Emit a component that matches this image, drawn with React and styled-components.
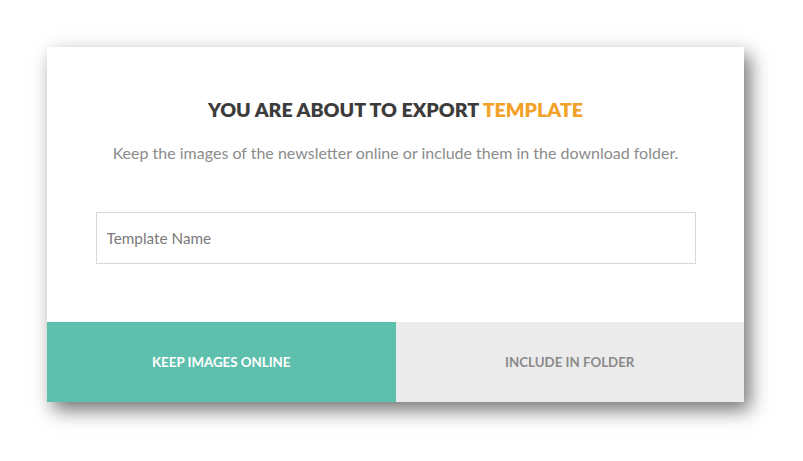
import React from "react";
import styled, { createGlobalStyle } from "styled-components";

const GlobalStyle = createGlobalStyle`
  html, body {
    margin: 0;
    padding: 0;
    background: #ffffff;
  }
`;

const App = () => {
  return (
    <>
      <GlobalStyle />
      <Page>
        <Card>
          <Body>
            <Title>
              YOU ARE ABOUT TO EXPORT <Accent>TEMPLATE</Accent>
            </Title>
            <Subtitle>
              Keep the images of the newsletter online or include them in the
              download folder.
            </Subtitle>
            <NameInput placeholder="Template Name" autoFocus />
          </Body>
          <Actions>
            <ActionButton $primary>KEEP IMAGES ONLINE</ActionButton>
            <ActionButton>INCLUDE IN FOLDER</ActionButton>
          </Actions>
        </Card>
      </Page>
    </>
  );
};

const Page = styled.div`
  display: flex;
  width: 803px;
  height: 461px;
  padding: 47px 0 0 47px;
  box-sizing: border-box;
  align-items: flex-start;
`;

const Card = styled.div`
  display: flex;
  flex-direction: column;
  width: 697px;
  height: 355px;
  background: #ffffff;
  box-shadow: 6px 8px 18px rgba(0, 0, 0, 0.55);
`;

const Body = styled.div`
  display: flex;
  flex: 1;
  flex-direction: column;
  align-items: center;
  padding-top: 51px;
  box-sizing: border-box;
`;

const Title = styled.div`
  font-family: "Lato", sans-serif;
  font-weight: 800;
  font-size: 19.6px;
  line-height: 24px;
  color: #3c3c3c;
`;

const Accent = styled.span`
  color: #f2a229;
`;

const Subtitle = styled.div`
  margin-top: 21px;
  font-family: "Lato", sans-serif;
  font-weight: 400;
  font-size: 16px;
  line-height: 20px;
  color: #8c8c8c;
`;

const NameInput = styled.input`
  margin-top: 49px;
  width: 600px;
  height: 52px;
  padding: 0 10px;
  box-sizing: border-box;
  border: 1px solid #d8d8d8;
  outline: none;
  font-family: "Lato", sans-serif;
  font-size: 15.3px;
  color: #555555;
  caret-color: #333333;

  &::placeholder {
    color: #7a7a7a;
  }
`;

const Actions = styled.div`
  display: flex;
  height: 80px;
`;

const ActionButton = styled.button`
  display: flex;
  flex: 1;
  justify-content: center;
  align-items: center;
  border: none;
  margin: 0;
  padding: 0;
  background: ${(p) => (p.$primary ? "#5fbfad" : "#ebebeb")};
  color: ${(p) => (p.$primary ? "#ffffff" : "#8a8a8a")};
  font-family: "Lato", sans-serif;
  font-weight: 700;
  font-size: 13.3px;
  cursor: pointer;
`;

export default App;
